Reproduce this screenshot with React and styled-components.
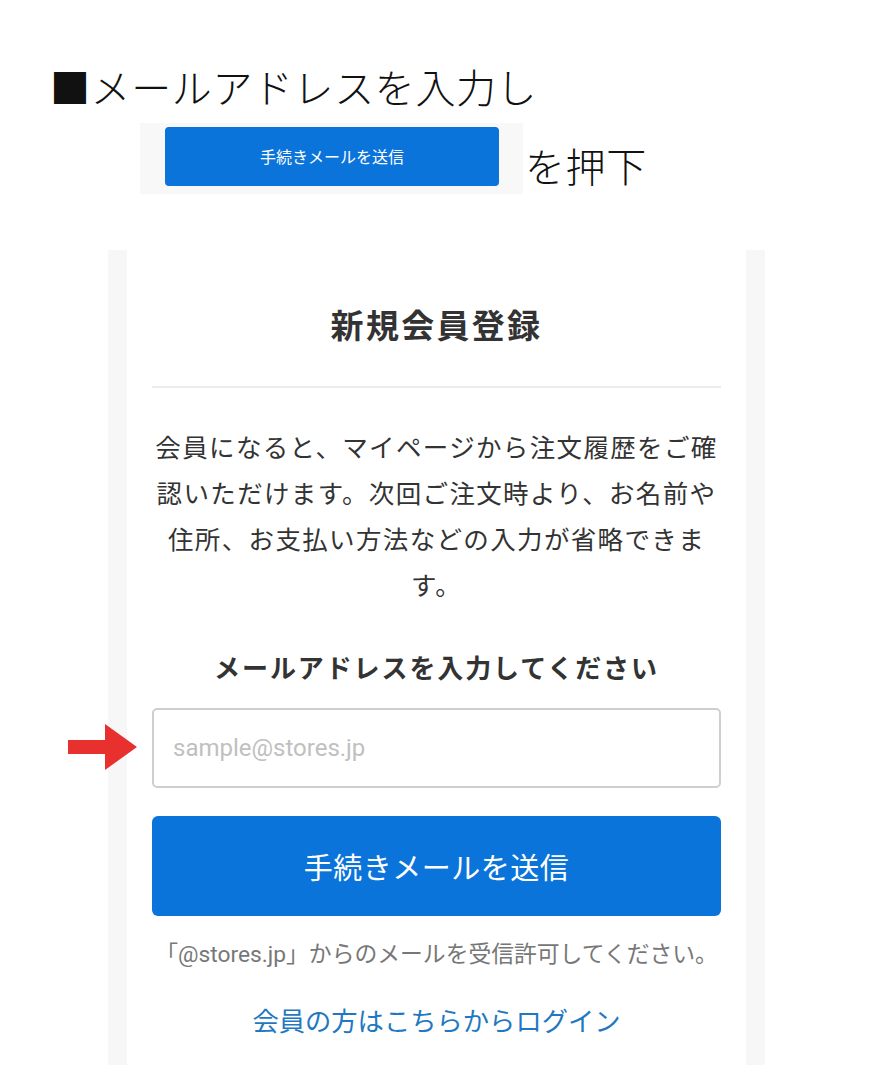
import React from 'react';
import styled, { createGlobalStyle } from 'styled-components';

const GlobalStyle = createGlobalStyle`
  html, body {
    margin: 0;
    padding: 0;
    background: #fff;
  }
  body {
    font-family: "Roboto", "Noto Sans CJK JP", sans-serif;
    color: #333;
  }
`;

const Page = styled.div`
  width: 874px;
  min-height: 1092px;
  padding-top: 60px;
  box-sizing: border-box;
`;

const Steps = styled.div`
  padding-left: 50px;
`;

const StepText = styled.div`
  font-family: "Noto Sans CJK JP", sans-serif;
  font-weight: 300;
  font-size: 40px;
  line-height: 52px;
  color: #111;
  letter-spacing: 0.6px;
`;

const StepRow = styled.div`
  display: flex;
  align-items: flex-end;
  margin-top: 11px;
  margin-left: 90px;
`;

const Crop = styled.div`
  width: 383px;
  height: 71px;
  box-sizing: border-box;
  background: #f8f8f8;
  padding: 4px 24px 0 25px;
`;

const MiniButton = styled.div`
  height: 59px;
  border-radius: 4px;
  background: #0a74da;
  color: #fff;
  font-family: "Noto Sans CJK JP", sans-serif;
  font-size: 16px;
  display: flex;
  align-items: center;
  justify-content: center;
  padding-bottom: 2px;
  box-sizing: border-box;
`;

const Push = styled(StepText)`
  margin-left: 2px;
  margin-bottom: 3px;
`;

const Frame = styled.div`
  width: 657px;
  margin: 56px 0 0 108px;
  background: #f7f7f7;
  padding: 0 19px;
  box-sizing: border-box;
`;

const Card = styled.div`
  background: #fff;
  padding: 52px 25px 30px;
  display: flex;
  flex-direction: column;
  align-items: stretch;
  text-align: center;
`;

const Title = styled.h1`
  margin: 0;
  font-family: "Noto Sans CJK JP", sans-serif;
  font-size: 33px;
  font-weight: 700;
  line-height: 44px;
  letter-spacing: 2.3px;
  color: #333;
`;

const Divider = styled.hr`
  border: none;
  height: 2px;
  background: #ececec;
  margin: 40px 0 0;
`;

const Lead = styled.p`
  margin: 35px 0 0;
  font-family: "Noto Sans CJK JP", sans-serif;
  font-size: 25.5px;
  line-height: 46px;
  letter-spacing: 1.35px;
  color: #333;
`;

const Label = styled.div`
  margin-top: 40px;
  font-family: "Noto Sans CJK JP", sans-serif;
  font-size: 26px;
  font-weight: 700;
  line-height: 40px;
  letter-spacing: 1.9px;
  color: #333;
`;

const Field = styled.div`
  position: relative;
  margin-top: 21px;
`;

const Input = styled.input`
  display: block;
  width: 100%;
  height: 80px;
  box-sizing: border-box;
  border: 2px solid #cfcfcf;
  border-radius: 5px;
  padding: 0 19px;
  font-family: "Roboto", sans-serif;
  font-size: 24px;
  color: #333;
  background: #fff;
  outline: none;

  &::placeholder {
    color: #c0c0c0;
  }
`;

const Arrow = styled.svg`
  position: absolute;
  left: -84px;
  top: 16px;
`;

const Submit = styled.button`
  margin-top: 28px;
  height: 100px;
  border: none;
  border-radius: 6px;
  background: #0a74da;
  color: #fff;
  font-family: "Noto Sans CJK JP", sans-serif;
  font-size: 29px;
  letter-spacing: 0.5px;
  cursor: pointer;
`;

const Note = styled.p`
  margin: 24px 0 0;
  font-size: 22.8px;
  line-height: 30px;
  color: #777;
`;

const LoginLink = styled.a`
  display: block;
  margin-top: 35px;
  font-family: "Noto Sans CJK JP", sans-serif;
  font-size: 26.3px;
  line-height: 30px;
  color: #1f78c1;
  text-decoration: none;
`;

const App = () => {
  return (
    <Page>
      <GlobalStyle />
      <Steps>
        <StepText>■メールアドレスを入力し</StepText>
        <StepRow>
          <Crop>
            <MiniButton>手続きメールを送信</MiniButton>
          </Crop>
          <Push>を押下</Push>
        </StepRow>
      </Steps>

      <Frame>
        <Card>
          <Title>新規会員登録</Title>
          <Divider />
          <Lead>
            会員になると、マイページから注文履歴をご確認いただけます。次回ご注文時より、お名前や住所、お支払い方法などの入力が省略できます。
          </Lead>
          <Label>メールアドレスを入力してください</Label>
          <Field>
            <Arrow width="69" height="46" viewBox="0 0 69 46">
              <path d="M0 16 H37 V0 L69 23 L37 46 V30 H0 Z" fill="#e8312f" />
            </Arrow>
            <Input type="email" placeholder="sample@stores.jp" />
          </Field>
          <Submit>手続きメールを送信</Submit>
          <Note>「@stores.jp」からのメールを受信許可してください。</Note>
          <LoginLink href="#">会員の方はこちらからログイン</LoginLink>
        </Card>
      </Frame>
    </Page>
  );
};

export default App;
